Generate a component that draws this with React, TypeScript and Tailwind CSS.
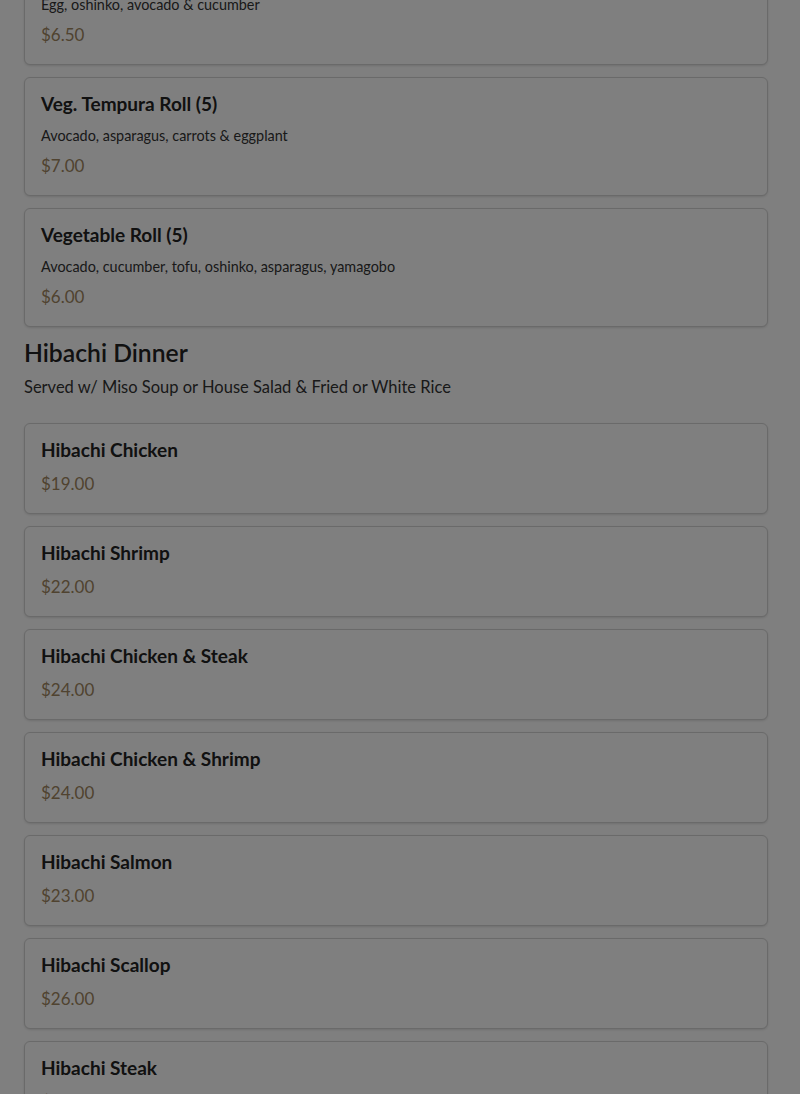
import React from 'react';

type Item = { name: string; desc?: string; price: string };

const rolls: Item[] = [
    { name: 'Futomaki Roll (5)', desc: 'Egg, oshinko, avocado & cucumber', price: '$6.50' },
    { name: 'Veg. Tempura Roll (5)', desc: 'Avocado, asparagus, carrots & eggplant', price: '$7.00' },
    { name: 'Vegetable Roll (5)', desc: 'Avocado, cucumber, tofu, oshinko, asparagus, yamagobo', price: '$6.00' },
];

const hibachi: Item[] = [
    { name: 'Hibachi Chicken', price: '$19.00' },
    { name: 'Hibachi Shrimp', price: '$22.00' },
    { name: 'Hibachi Chicken & Steak', price: '$24.00' },
    { name: 'Hibachi Chicken & Shrimp', price: '$24.00' },
    { name: 'Hibachi Salmon', price: '$23.00' },
    { name: 'Hibachi Scallop', price: '$26.00' },
    { name: 'Hibachi Steak', price: '$24.00' },
];

const MenuCard: React.FC<{ item: Item }> = ({ item }) => (
    <div className="border border-[#d4d4d4] rounded-md bg-white px-4 pt-4 pb-[17px] shadow-sm">
        <h3 className="text-[19px] leading-5 font-bold text-[#222]">{item.name}</h3>
        {item.desc && (
            <p className="mt-3 text-[14.4px] leading-5 text-[#333]">{item.desc}</p>
        )}
        <p className={`${item.desc ? 'mt-2' : 'mt-3'} text-[17px] leading-6 text-[#a08660]`}>{item.price}</p>
    </div>
);

const App: React.FC = () => {
    return (
        <div className="relative h-[1094px] overflow-hidden bg-white" style={{ fontFamily: 'Lato, "Noto Sans", sans-serif' }}>
            <div className="pl-6 pr-8 -mt-[54px] flex flex-col gap-3">
                {rolls.map((r) => (
                    <MenuCard key={r.name} item={r} />
                ))}
                <div>
                    <h2 className="text-[24.7px] leading-7 font-semibold text-[#222]">Hibachi Dinner</h2>
                    <p className="mt-2 text-[16.5px] leading-6 text-[#333]">
                        Served w/ Miso Soup or House Salad &amp; Fried or White Rice
                    </p>
                </div>
                <div className="mt-3 flex flex-col gap-3">
                    {hibachi.map((h) => (
                        <MenuCard key={h.name} item={h} />
                    ))}
                </div>
            </div>
            <div className="absolute inset-0 bg-black/50" />
        </div>
    );
};

export default App;
